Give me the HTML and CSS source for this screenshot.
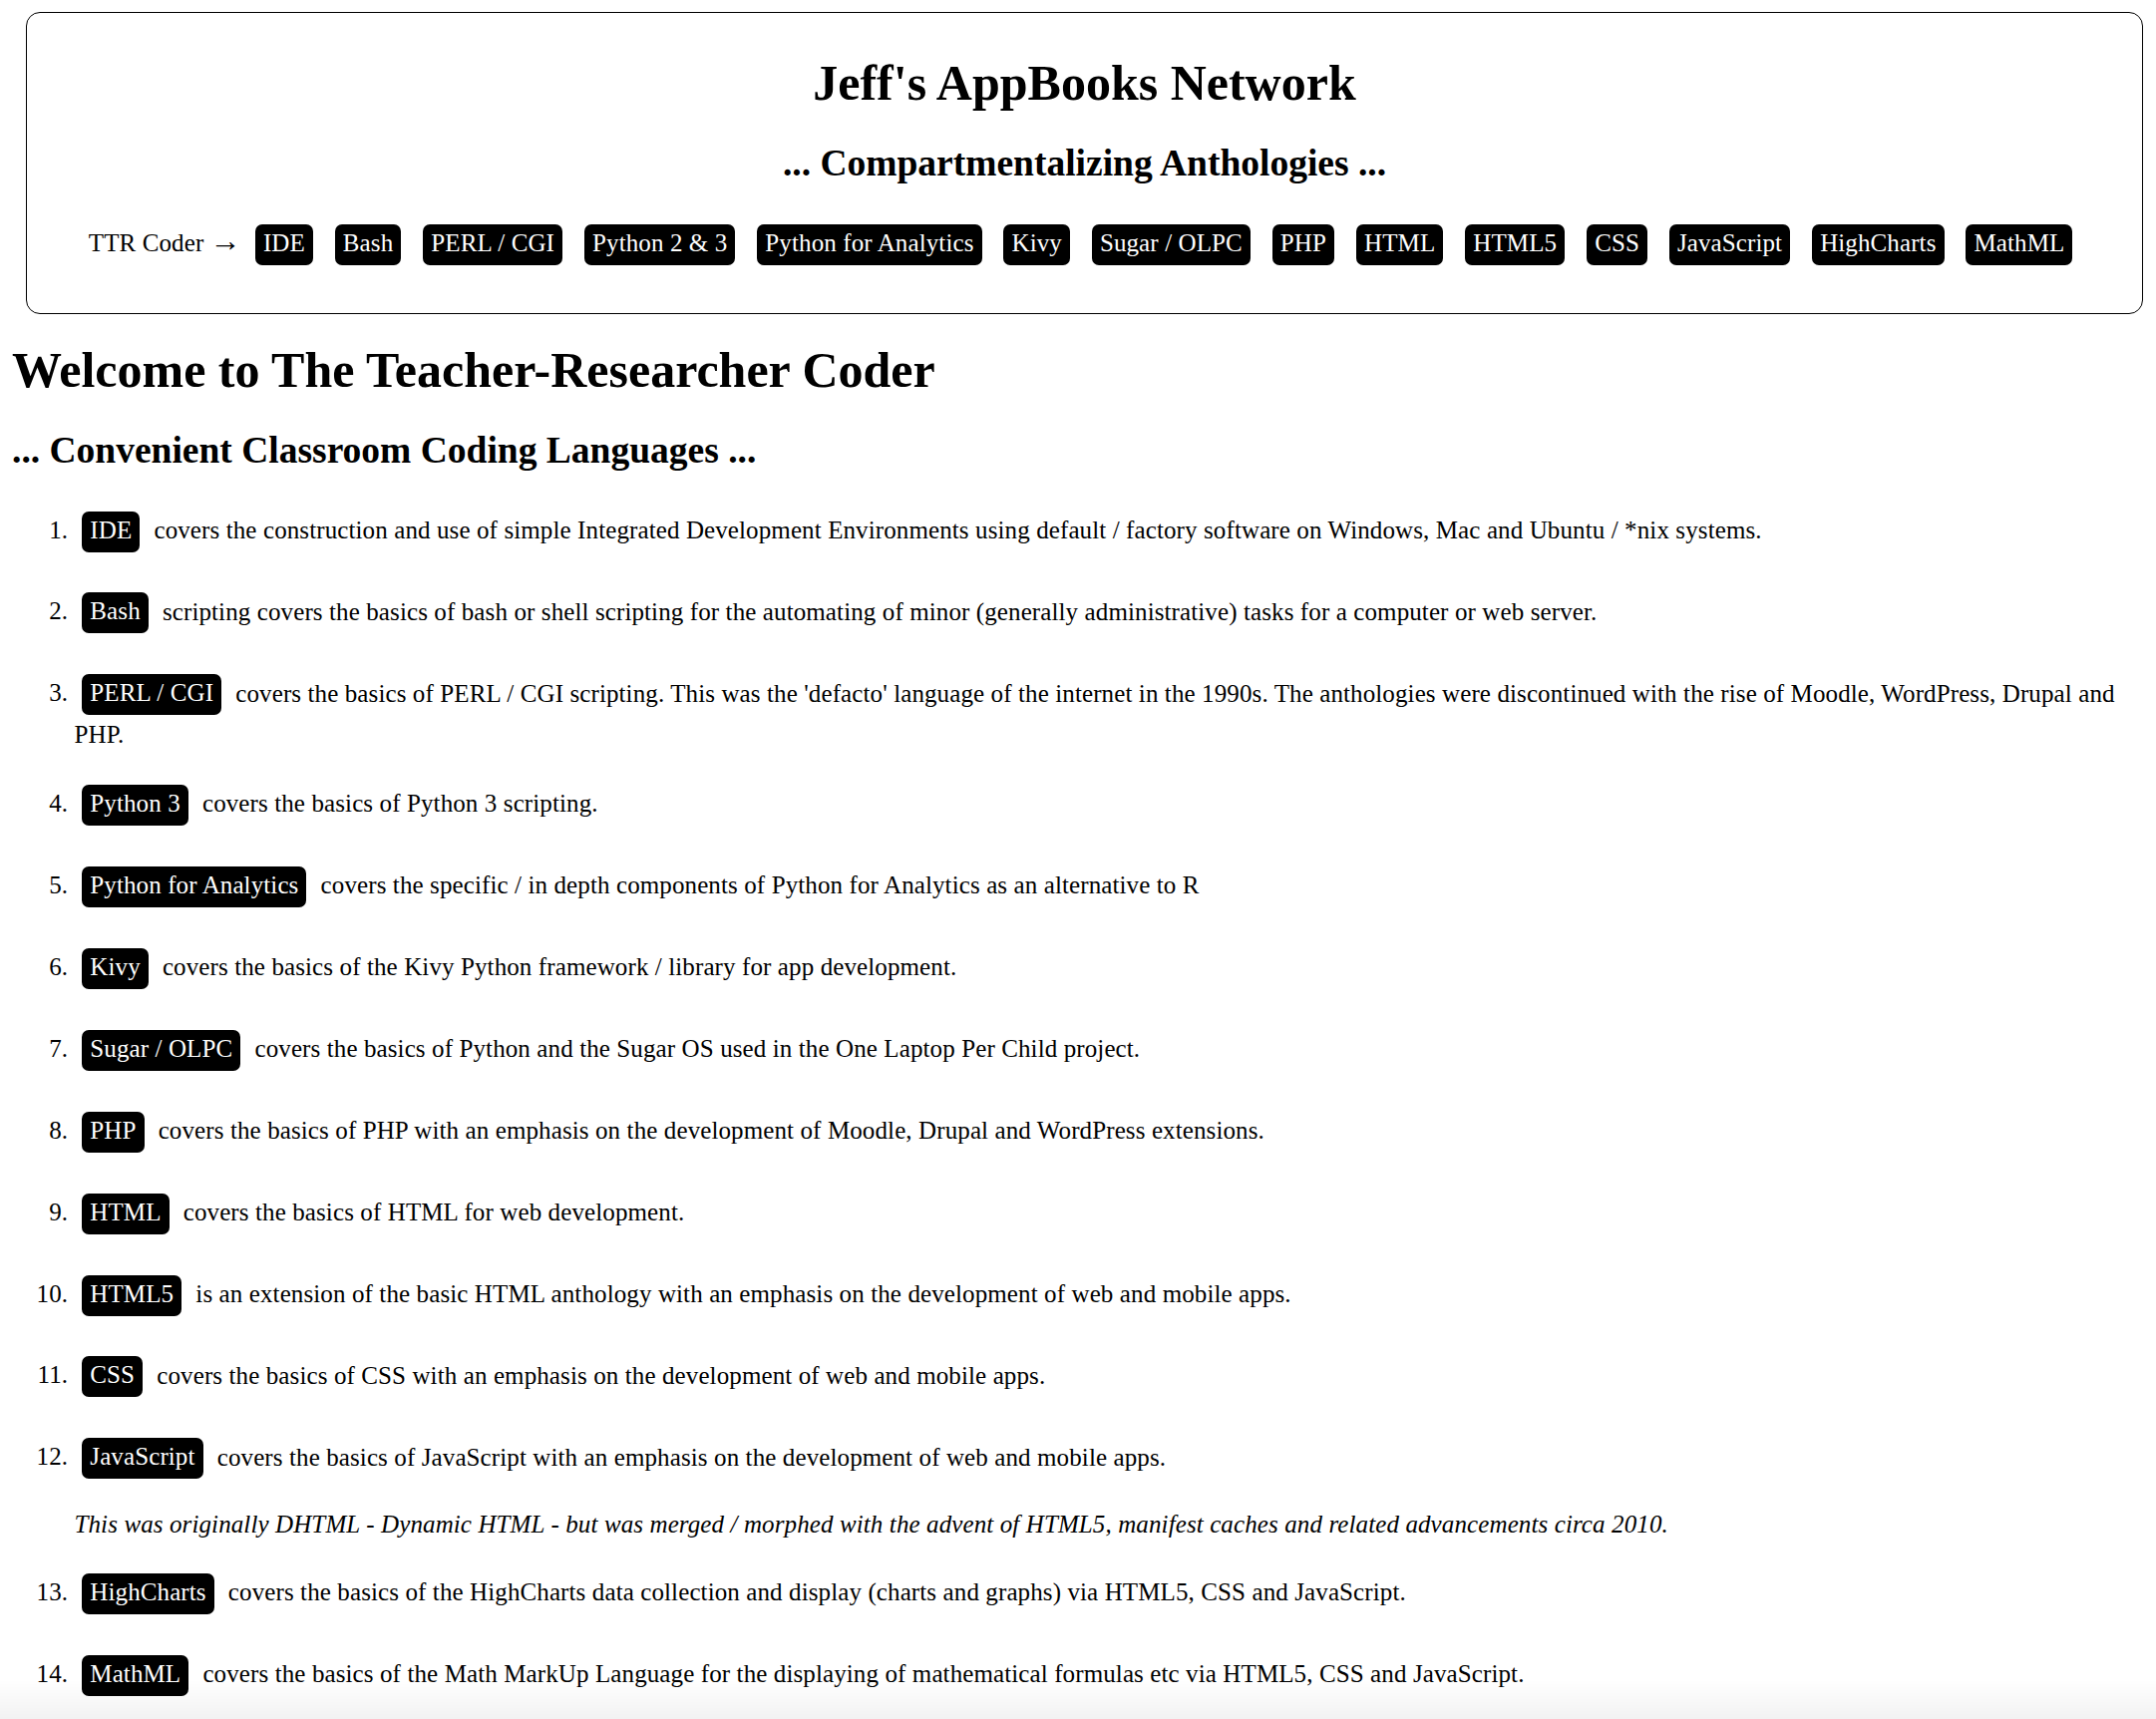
FILE: index.html
```html
<!DOCTYPE html>
<html lang="en">
<head>
<meta charset="utf-8">
<title>The Teacher-Researcher Coder</title>
<link rel="stylesheet" href="styles.css">
</head>
<body>
<header class="masthead">
  <h1 class="site-title">Jeff's AppBooks Network</h1>
  <h2 class="site-tagline">... Compartmentalizing Anthologies ...</h2>
  <nav class="nav">TTR Coder <span class="arrow">&rarr;</span> <a class="badge">IDE</a> <a class="badge">Bash</a> <a class="badge">PERL / CGI</a> <a class="badge">Python 2 &amp; 3</a> <a class="badge">Python for Analytics</a> <a class="badge">Kivy</a> <a class="badge">Sugar / OLPC</a> <a class="badge">PHP</a> <a class="badge">HTML</a> <a class="badge">HTML5</a> <a class="badge">CSS</a> <a class="badge">JavaScript</a> <a class="badge">HighCharts</a> <a class="badge">MathML</a></nav>
</header>

<main>
  <h1 class="page-title">Welcome to The Teacher-Researcher Coder</h1>
  <h2 class="page-subtitle">... Convenient Classroom Coding Languages ...</h2>
  <ol class="langs">
    <li><p><a class="badge">IDE</a> covers the construction and use of simple Integrated Development Environments using default / factory software on Windows, Mac and Ubuntu / *nix systems.</p></li>
    <li><p><a class="badge">Bash</a> scripting covers the basics of bash or shell scripting for the automating of minor (generally administrative) tasks for a computer or web server.</p></li>
    <li><p><a class="badge">PERL / CGI</a> covers the basics of PERL / CGI scripting. This was the 'defacto' language of the internet in the 1990s. The anthologies were discontinued with the rise of Moodle, WordPress, Drupal and PHP.</p></li>
    <li><p><a class="badge">Python 3</a> covers the basics of Python 3 scripting.</p></li>
    <li><p><a class="badge">Python for Analytics</a> covers the specific / in depth components of Python for Analytics as an alternative to R</p></li>
    <li><p><a class="badge">Kivy</a> covers the basics of the Kivy Python framework / library for app development.</p></li>
    <li><p><a class="badge">Sugar / OLPC</a> covers the basics of Python and the Sugar OS used in the One Laptop Per Child project.</p></li>
    <li><p><a class="badge">PHP</a> covers the basics of PHP with an emphasis on the development of Moodle, Drupal and WordPress extensions.</p></li>
    <li><p><a class="badge">HTML</a> covers the basics of HTML for web development.</p></li>
    <li><p><a class="badge">HTML5</a> is an extension of the basic HTML anthology with an emphasis on the development of web and mobile apps.</p></li>
    <li><p><a class="badge">CSS</a> covers the basics of CSS with an emphasis on the development of web and mobile apps.</p></li>
    <li><p><a class="badge">JavaScript</a> covers the basics of JavaScript with an emphasis on the development of web and mobile apps.</p>
      <p class="note"><em>This was originally DHTML - Dynamic HTML - but was merged / morphed with the advent of HTML5, manifest caches and related advancements circa 2010.</em></p></li>
    <li><p><a class="badge">HighCharts</a> covers the basics of the HighCharts data collection and display (charts and graphs) via HTML5, CSS and JavaScript.</p></li>
    <li><p><a class="badge">MathML</a> covers the basics of the Math MarkUp Language for the displaying of mathematical formulas etc via HTML5, CSS and JavaScript.</p></li>
  </ol>
</main>
<div class="bottom-fade"></div>
</body>
</html>
```

FILE: styles.css
```css
html {
  background: #fff;
}

body {
  margin: 0;
  padding: 12px 13px 0 12px;
  font-family: "Liberation Serif", "Times New Roman", serif;
  font-size: 25px;
  line-height: 29px;
  letter-spacing: 0.11px;
  color: #000;
  background: #fff;
}

h1,
h2 {
  letter-spacing: 0;
}

/* ---------- masthead ---------- */
.masthead {
  margin: 0 0 0 14px;
  border: 1.5px solid #000;
  border-radius: 14px;
  padding: 9px 16px 40.5px;
  text-align: center;
}

.site-title {
  margin: 32px 0 0;
  font-size: 50px;
  line-height: 58px;
  font-weight: bold;
}

.site-tagline {
  margin: 29.8px 0 32.2px;
  font-size: 37.5px;
  line-height: 43px;
  font-weight: bold;
}

.nav {
  margin: 0;
}

.arrow {
  font-family: "Liberation Serif", serif;
  font-size: 31px;
  line-height: 1;
  letter-spacing: 0;
}

/* ---------- badge links ---------- */
.badge {
  display: inline-block;
  margin: 7.8px 7.8px 5px;
  padding: 4px 8px 8px;
  line-height: 29px;
  background: #000;
  color: #fff;
  border-radius: 7px;
  text-decoration: none;
}

.nav .badge {
  margin-bottom: 7.8px;
}

/* ---------- main content ---------- */
.page-title {
  margin: 27px 0 30.2px;
  font-size: 50px;
  line-height: 58px;
  font-weight: bold;
}

.page-subtitle {
  margin: 0 0 31.5px;
  font-size: 37.5px;
  line-height: 43px;
  font-weight: bold;
}

.langs {
  margin: 0;
  padding-left: 62.5px;
}

.langs p {
  margin: 28.1px 0;
}

.langs .note {
  line-height: 25.5px;
}

.bottom-fade {
  position: fixed;
  left: 0;
  right: 0;
  bottom: 0;
  height: 40px;
  background: linear-gradient(to bottom, rgba(0, 0, 0, 0), rgba(0, 0, 0, 0.05));
  pointer-events: none;
}
```
